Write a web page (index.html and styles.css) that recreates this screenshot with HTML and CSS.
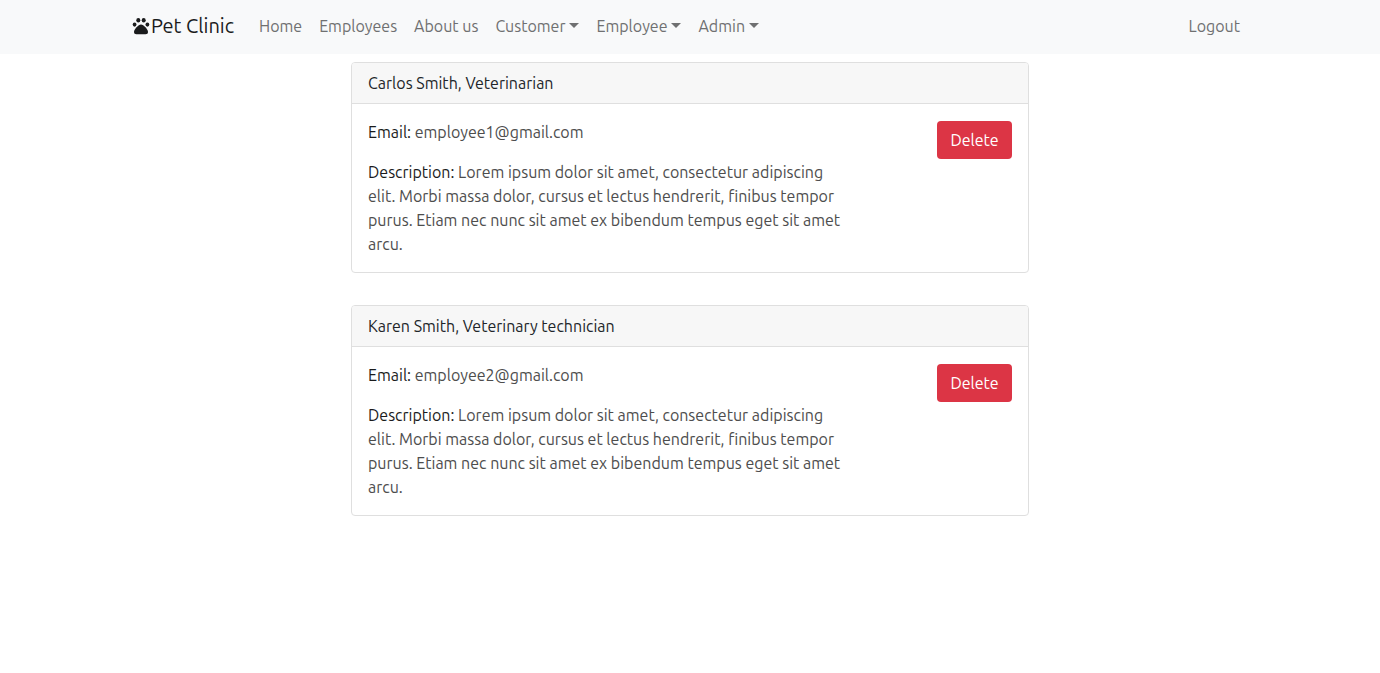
FILE: index.html
```html
<!DOCTYPE html>
<html lang="en">
<head>
<meta charset="utf-8">
<meta name="viewport" content="width=device-width, initial-scale=1">
<title>Pet Clinic</title>
<link rel="stylesheet" href="styles.css">
</head>
<body>
<header class="navbar">
  <nav class="container">
    <a class="brand" href="#"><svg class="brand-icon" viewBox="0 0 18 18" aria-hidden="true"><ellipse cx="2.6" cy="7.6" rx="1.9" ry="2.1"/><ellipse cx="6.3" cy="3.2" rx="2" ry="2.2"/><ellipse cx="11.7" cy="3.2" rx="2" ry="2.2"/><ellipse cx="15.4" cy="7.6" rx="1.9" ry="2.1"/><path d="M9 7.6c-2.600 0-7 4.800-7 7.400 0 1.500.9 2.200 2.400 2.200h9.200c1.500 0 2.400-.7 2.400-2.200C16 12.400 11.600 7.600 9 7.600z"/></svg>Pet Clinic</a>
    <ul class="menu">
      <li><a class="nav-link" href="#">Home</a></li>
      <li><a class="nav-link" href="#">Employees</a></li>
      <li><a class="nav-link" href="#">About us</a></li>
      <li><button class="nav-link dropdown" type="button" aria-haspopup="true">Customer</button></li>
      <li><button class="nav-link dropdown" type="button" aria-haspopup="true">Employee</button></li>
      <li><button class="nav-link dropdown" type="button" aria-haspopup="true">Admin</button></li>
    </ul>
    <a class="nav-link" href="#">Logout</a>
  </nav>
</header>
<main class="cards">
  <article class="card">
    <h2 class="card-header">Carlos Smith, Veterinarian</h2>
    <div class="card-body">
      <div class="details">
        <p><span class="label">Email:</span> employee1@gmail.com</p>
        <p><span class="label">Description:</span> Lorem ipsum dolor sit amet, consectetur adipiscing elit. Morbi massa dolor, cursus et lectus hendrerit, finibus tempor purus. Etiam nec nunc sit amet ex bibendum tempus eget sit amet arcu.</p>
      </div>
      <button class="delete" type="button">Delete</button>
    </div>
  </article>
  <article class="card">
    <h2 class="card-header">Karen Smith, Veterinary technician</h2>
    <div class="card-body">
      <div class="details">
        <p><span class="label">Email:</span> employee2@gmail.com</p>
        <p><span class="label">Description:</span> Lorem ipsum dolor sit amet, consectetur adipiscing elit. Morbi massa dolor, cursus et lectus hendrerit, finibus tempor purus. Etiam nec nunc sit amet ex bibendum tempus eget sit amet arcu.</p>
      </div>
      <button class="delete" type="button">Delete</button>
    </div>
  </article>
</main>
</body>
</html>
```
FILE: styles.css
```css
* { box-sizing: border-box; }
body {
  margin: 0;
  background: #fff;
  color: #212529;
  font: 16px/24px Ubuntu, "Noto Sans", sans-serif;
}
a { text-decoration: none; }
button { font: inherit; cursor: pointer; }
.navbar { background: #f8f9fa; }
.container {
  display: flex;
  align-items: center;
  max-width: 1140px;
  min-height: 54px;
  margin: 0 auto;
  padding: 0 12px 2px;
}
.brand {
  display: flex;
  align-items: center;
  margin-right: 17px;
  color: #1a1b1c;
  font-size: 20px;
  line-height: 30px;
  white-space: nowrap;
}
.brand-icon { width: 18px; height: 18px; margin-right: 1px; fill: currentColor; }
.menu {
  display: flex;
  flex-wrap: wrap;
  flex: 1;
  gap: 1px;
  margin: 0;
  padding: 0;
  list-style: none;
}
.nav-link {
  display: block;
  padding: 8px;
  border: 0;
  background: none;
  color: #6f7071;
  line-height: 24px;
}
.dropdown::after {
  content: "";
  display: inline-block;
  margin-left: 4px;
  vertical-align: 4px;
  border: 5px solid transparent;
  border-top-color: currentColor;
  border-bottom: 0;
}
.cards {
  display: flex;
  flex-direction: column;
  gap: 32px;
  max-width: 678px;
  margin: 8px auto 32px;
}
.card { border: 1px solid #dfdfdf; border-radius: 4px; overflow: hidden; }
.card-header {
  margin: 0;
  padding: 8px 16px;
  border-bottom: 1px solid #dfdfdf;
  background: #f7f7f7;
  font-size: 16px;
  font-weight: 400;
}
.card-body {
  display: flex;
  justify-content: space-between;
  align-items: flex-start;
  padding: 16px;
}
.details { flex: 0 1 75%; color: #4d4d4d; }
.details p { margin: 0 0 16px; }
.details p:last-child { margin-bottom: 0; }
.label { color: #1a1b1c; }
.delete {
  min-width: 75px;
  margin-top: 1px;
  padding: 7px 12px;
  border: 0;
  border-radius: 4px;
  background: #dc3545;
  color: #fff;
}
```
